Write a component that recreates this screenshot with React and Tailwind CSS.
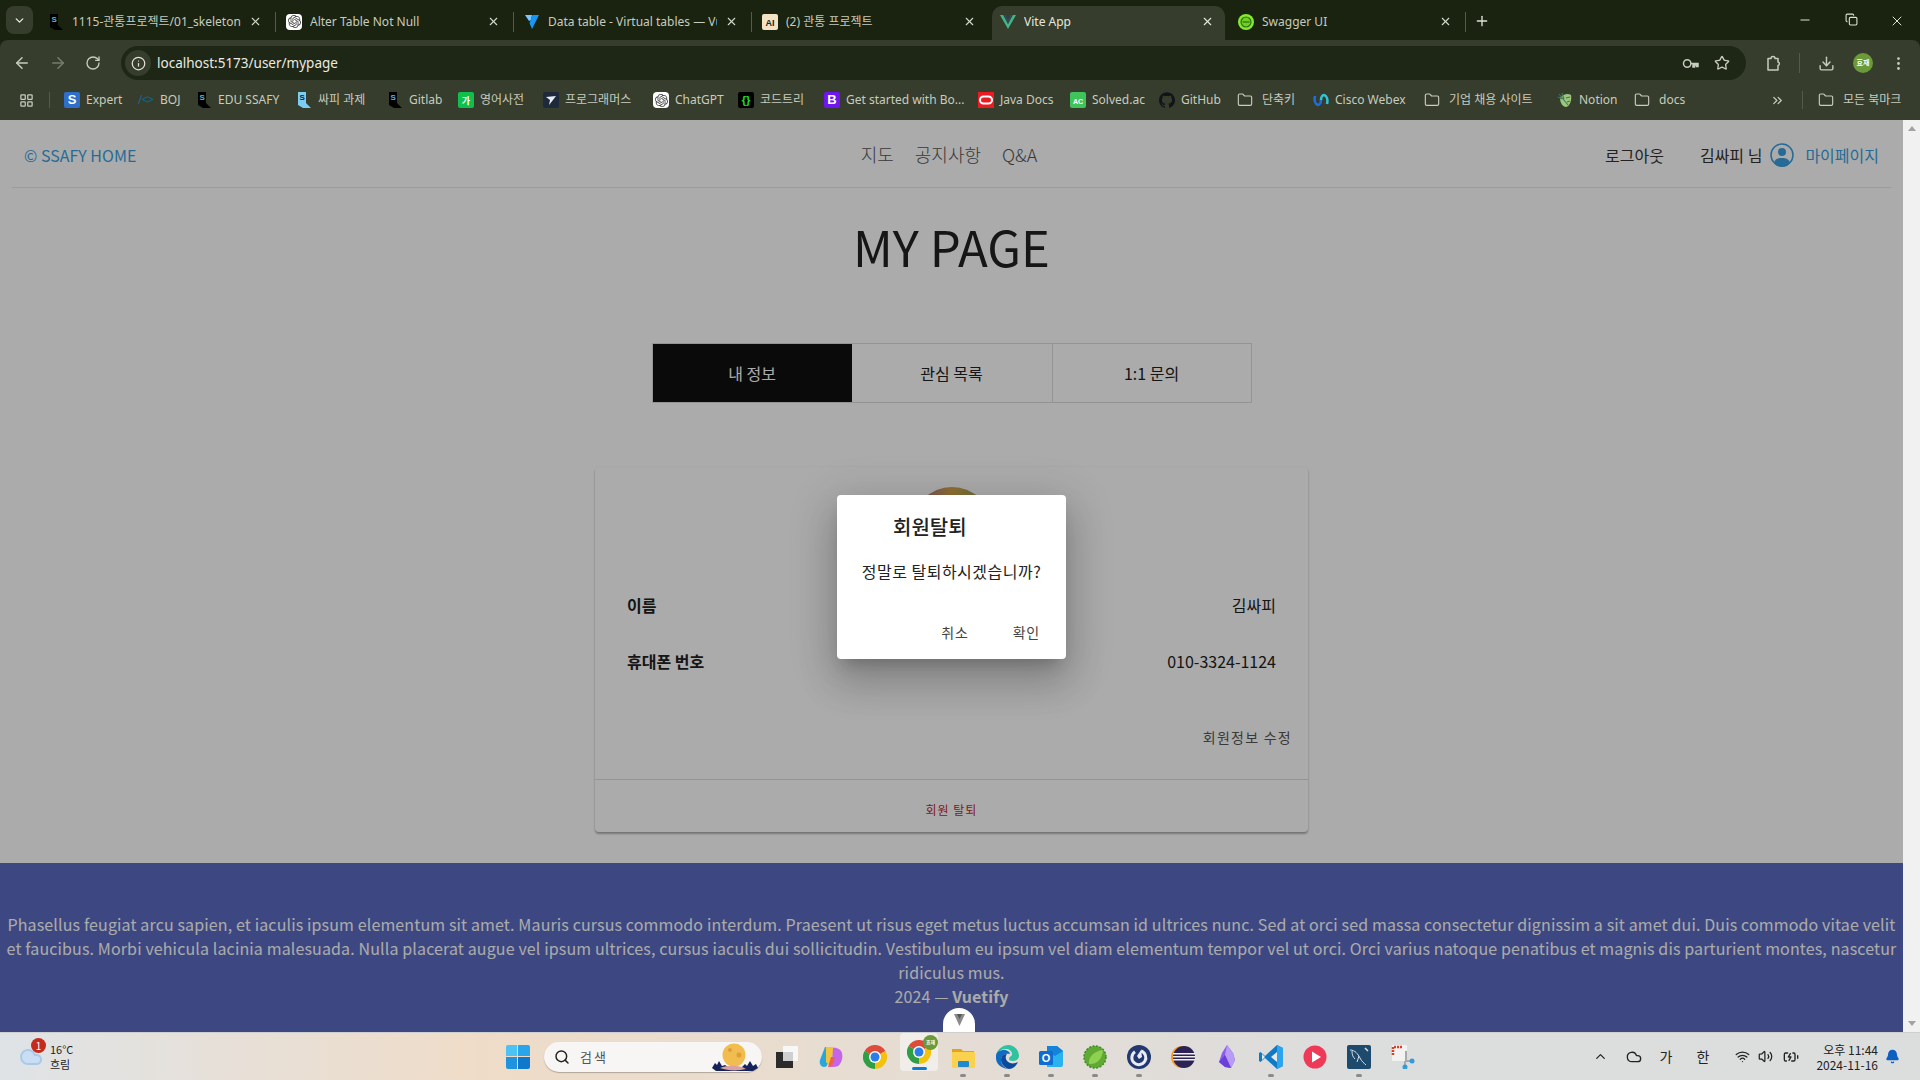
import {
  ArrowLeft,
  ArrowRight,
  BatteryCharging,
  Bell,
  ChevronDown,
  ChevronUp,
  ChevronsRight,
  Cloud,
  Copy,
  Download,
  EllipsisVertical,
  Folder,
  Info,
  LayoutGrid,
  Minus,
  Plus,
  RotateCw,
  Search,
  Star,
  Volume2,
  Wifi,
  X,
} from 'lucide-react'
import { SiGithub, SiOpenai } from 'react-icons/si'

const FOOTER_TEXT =
  'Phasellus feugiat arcu sapien, et iaculis ipsum elementum sit amet. Mauris cursus commodo interdum. Praesent ut risus eget metus luctus accumsan id ultrices nunc. Sed at orci sed massa consectetur dignissim a sit amet dui. Duis commodo vitae velit et faucibus. Morbi vehicula lacinia malesuada. Nulla placerat augue vel ipsum ultrices, cursus iaculis dui sollicitudin. Vestibulum eu ipsum vel diam elementum tempor vel ut orci. Orci varius natoque penatibus et magnis dis parturient montes, nascetur ridiculus mus.'

/* favicons */
function DarkS({ fill = '#000', letter = '#4db6e8' }) {
  return (
    <svg width="16" height="16" viewBox="0 0 16 16">
      <path d="M2 0h8v11l5 5H7l-5-3z" fill={fill} />
      <text x="3.5" y="8" fontSize="8" fontWeight="700" fill={letter} fontFamily="Liberation Sans">S</text>
    </svg>
  )
}

function Badge({ bg, color = '#fff', children, size = 11 }) {
  return (
    <svg width="16" height="16" viewBox="0 0 16 16">
      <rect width="16" height="16" rx="2" fill={bg} />
      <text x="8" y="12.2" textAnchor="middle" fontSize={size} fontWeight="700" fill={color} fontFamily="Liberation Sans, Noto Sans CJK KR">
        {children}
      </text>
    </svg>
  )
}

function GptIcon() {
  return (
    <span className="flex w-4 h-4 items-center justify-center rounded-[4px] bg-white">
      <SiOpenai size={13} color="#444" />
    </span>
  )
}

function VueV() {
  return (
    <svg width="16" height="16" viewBox="0 0 16 16">
      <path d="M0 1h3.2L8 10l4.8-9H16L8 15z" fill="#41b883" />
      <path d="M3.2 1h2.4L8 5.5 10.4 1h2.4L8 10z" fill="#35495e" />
    </svg>
  )
}

function VuetifyV() {
  return (
    <svg width="16" height="16" viewBox="0 0 16 16">
      <path d="M1 1h7l-1 5-2 1z" fill="#7bc6ff" />
      <path d="M15 1H8.500L5.500 9 8 15z" fill="#1697f6" />
    </svg>
  )
}

function SwaggerIcon() {
  return (
    <svg width="16" height="16" viewBox="0 0 16 16">
      <circle cx="8" cy="8" r="8" fill="#85ea2d" />
      <circle cx="8" cy="8" r="5" fill="#6fd01f" stroke="#2f6d1e" strokeWidth="1.200" />
      <rect x="4.500" y="7.400" width="7" height="1.200" fill="#2f6d1e" />
    </svg>
  )
}

function CiscoIcon() {
  return (
    <svg width="16" height="16" viewBox="0 0 16 16" fill="none" strokeWidth="2.600">
      <path d="M2 4c-1 4 0 8 3 9 2 0 3-3 3-5" stroke="#1d6fe0" />
      <path d="M14 12c1-4 0-8-3-9-2 0-3 3-3 5" stroke="#35c2d8" />
    </svg>
  )
}

function NotionLeaf() {
  return (
    <svg width="16" height="16" viewBox="0 0 16 16">
      <path d="M3 6c3-4 8-5 11-3 1 5-1 11-5 12-3 0-6-4-6-9z" fill="#9cc77a" />
      <path d="M2 2l9 11M5 1l2 6M1 5l4 2M9 6l4-1M10 10l3-1" stroke="#3f7a5c" strokeWidth="1.100" />
    </svg>
  )
}

function KeyIcon() {
  return (
    <svg width="17" height="17" viewBox="0 0 17 17" fill="none" stroke="currentColor" strokeWidth="1.500">
      <circle cx="5.200" cy="8.500" r="3.700" />
      <path d="M9 8.500h7v3h-1.500v-1.500h-2v2H11v-3.500" />
    </svg>
  )
}

function ExtensionIcon() {
  return (
    <svg width="18" height="18" viewBox="0 0 18 18" fill="none" stroke="currentColor" strokeWidth="1.500">
      <path d="M4 4.500h3a2 2 0 0 1 4 0h3v3.500a1.800 1.800 0 0 1 0 3.500V16H4z" strokeLinejoin="round" />
    </svg>
  )
}

const BM_FOLDER = <Folder size={16} strokeWidth={1.700} color="#c9ccc0" />

const BOOKMARKS = [
  { w: 'w-[74px]', label: 'Expert', icon: <Badge bg="#2f6fc9" size={13}>S</Badge> },
  {
    w: 'w-[58px]',
    label: 'BOJ',
    icon: <span className="w-4 text-[12px] leading-4 whitespace-nowrap tracking-[-1px] text-[#0b6a9c]">{'/<>'}</span>,
  },
  { w: 'w-[100px]', label: 'EDU SSAFY', icon: <DarkS /> },
  { w: 'w-[91px]', label: '싸피 과제', icon: <DarkS fill="#7ccdf2" letter="#123" /> },
  { w: 'w-[71px]', label: 'Gitlab', icon: <DarkS /> },
  { w: 'w-[85px]', label: '영어사전', icon: <Badge bg="#0fc14c" size={9}>가</Badge> },
  {
    w: 'w-[110px]',
    label: '프로그래머스',
    icon: (
      <svg width="16" height="16" viewBox="0 0 16 16">
        <rect width="16" height="16" rx="2" fill="#1e2a3c" />
        <path d="M3 5l10-1-3 4-4 5 1-5z" fill="#e8edf2" />
      </svg>
    ),
  },
  { w: 'w-[85px]', label: 'ChatGPT', icon: <GptIcon /> },
  { w: 'w-[86px]', label: '코드트리', icon: <Badge bg="#000" color="#1fe01f" size={11}>{'{}'}</Badge> },
  { w: 'w-[154px]', label: 'Get started with Bo...', icon: <Badge bg="#7014f0" size={13}>B</Badge> },
  {
    w: 'w-[92px]',
    label: 'Java Docs',
    icon: (
      <svg width="16" height="16" viewBox="0 0 16 16">
        <rect width="16" height="16" fill="#ea1b22" />
        <rect x="2" y="4.500" width="12" height="7" rx="3.500" fill="none" stroke="#fff" strokeWidth="2" />
      </svg>
    ),
  },
  { w: 'w-[89px]', label: 'Solved.ac', icon: <Badge bg="#3fc45c" size={7}>AC</Badge> },
  { w: 'w-[78px]', label: 'GitHub', icon: <SiGithub size={16} color="#11151a" /> },
  { w: 'w-[76px]', label: '단축키', gap: 'gap-[9px]', icon: BM_FOLDER },
  { w: 'w-[111px]', label: 'Cisco Webex', icon: <CiscoIcon /> },
  { w: 'w-[133px]', label: '기업 채용 사이트', gap: 'gap-[9px]', icon: BM_FOLDER },
  { w: 'w-[77px]', label: 'Notion', icon: <NotionLeaf /> },
  { w: 'w-[60px]', label: 'docs', gap: 'gap-[9px]', icon: BM_FOLDER },
]

const TABS = [
  { title: '1115-관통프로젝트/01_skeleton', icon: <DarkS /> },
  { title: 'Alter Table Not Null', icon: <GptIcon /> },
  { title: 'Data table - Virtual tables — Vuetify', icon: <VuetifyV /> },
  { title: '(2) 관통 프로젝트', icon: <Badge bg="#f4e3c3" color="#222" size={9}>AI</Badge> },
  { title: 'Vite App', icon: <VueV />, active: true },
  { title: 'Swagger UI', icon: <SwaggerIcon /> },
]

function ChromeTab({ title, icon, active }) {
  if (active) {
    return (
      <div className="ml-[2px] mr-[3px] flex h-[34px] w-[233px] items-center gap-2 rounded-t-[10px] bg-[#363d2c] pb-[3px] pl-[8px] pr-[11px]">
        <span className="shrink-0">{icon}</span>
        <span className="flex-1 truncate text-[12px] text-[#e6e8de]">{title}</span>
        <X size={13} color="#e6e8de" />
      </div>
    )
  }
  return (
    <div className="flex h-[34px] w-[238px] items-center gap-2 pb-[3px] pl-[10px] pr-[14px]">
      <span className="shrink-0">{icon}</span>
      <span className="flex-1 overflow-hidden whitespace-nowrap text-[12px] text-[#c8cbbf]">{title}</span>
      <X size={13} color="#d5d8cc" />
    </div>
  )
}

function TabStrip() {
  return (
    <div className="flex h-10 items-end bg-[#1a2310]">
      <div className="mb-[6px] ml-[6px] mr-[5px] flex h-[28px] w-[27px] items-center justify-center self-end rounded-lg bg-[#363d2c]">
        <ChevronDown size={13} color="#e6e8de" strokeWidth={2.500} />
      </div>
      {TABS.map((t, i) => (
        <div key={t.title} className="flex items-center">
          <ChromeTab {...t} />
          {i < 3 || i === 5 ? <span className="ml-[-1px] mb-[3px] h-[20px] w-px bg-[#555b48]" /> : null}
        </div>
      ))}
      <div className="mb-[11px] ml-[8px]">
        <Plus size={16} color="#dfe2d6" />
      </div>
      <div className="ml-auto mb-[11px] flex">
        <span className="flex w-[46px] justify-center"><Minus size={14} color="#dfe2d6" /></span>
        <span className="flex w-[46px] justify-center"><Copy size={13} color="#dfe2d6" /></span>
        <span className="flex w-[46px] justify-center"><X size={16} strokeWidth={1.500} color="#dfe2d6" /></span>
      </div>
    </div>
  )
}

function Toolbar() {
  return (
    <div className="flex h-[43px] items-center rounded-t-lg bg-[#363d2c] pt-[3px] text-[#c8cbbf]">
      <div className="flex w-[121px] gap-[18px] pl-[13px]">
        <ArrowLeft size={18} />
        <ArrowRight size={18} color="#777c6c" />
        <RotateCw size={16} className="mt-px" />
      </div>
      <div className="flex h-[34px] w-[1625px] items-center rounded-full bg-[#1e2616] pl-[4px] pr-[16px]">
        <span className="flex h-[26px] w-[26px] items-center justify-center rounded-full bg-[#363d2c]">
          <Info size={15} color="#e0e3d7" />
        </span>
        <span className="ml-[6px] flex-1 text-[13.500px] text-[#e9ebe2]">localhost:5173/user/mypage</span>
        <span className="mr-[15px]"><KeyIcon /></span>
        <Star size={16} />
      </div>
      <span className="ml-[18px]"><ExtensionIcon /></span>
      <span className="ml-[17px] h-[20px] w-px bg-[#555b48]" />
      <Download size={17} className="ml-[18px]" />
      <span className="ml-[18px] flex h-5 w-5 items-center justify-center rounded-full bg-[#6a9a3a] text-[7px] font-bold text-white">효재</span>
      <EllipsisVertical size={17} className="ml-[17px]" />
    </div>
  )
}

function BookmarksBar() {
  return (
    <div className="flex h-[37px] items-center bg-[#363d2c] pb-[3px] text-[12px] text-[#c8cbbf]">
      <LayoutGrid size={15} className="ml-[19px]" />
      <span className="ml-[15px] mr-[14px] h-[16px] w-px bg-[#555b48]" />
      {BOOKMARKS.map((b) => (
        <div key={b.label} className={`flex shrink-0 items-center whitespace-nowrap ${b.w} ${b.gap || 'gap-[6px]'}`}>
          <span className="flex h-4 w-4 shrink-0">{b.icon}</span>
          <span>{b.label}</span>
        </div>
      ))}
      <ChevronsRight size={15} className="ml-[76px]" />
      <span className="ml-[17px] h-[18px] w-px bg-[#555b48]" />
      <div className="ml-[15px] flex items-center gap-[9px] whitespace-nowrap">
        {BM_FOLDER}
        <span>모든 북마크</span>
      </div>
    </div>
  )
}

function Nav() {
  return (
    <header className="mx-3 grid h-[68px] grid-cols-[1fr_auto_1fr] items-center border-b border-[#e8e8ee] px-3 pt-[2px]">
      <a className="text-[16px] text-[#3b9fdf]">© SSAFY HOME</a>
      <nav className="mr-[5px] flex gap-[21px] text-[18px] font-light text-[#555]">
        <span>지도</span>
        <span>공지사항</span>
        <span>Q&amp;A</span>
      </nav>
      <div className="flex items-center justify-end text-[16px] text-[#333]">
        <span className="mr-[36px]">로그아웃</span>
        <span className="mr-[8px]">김싸피 님</span>
        <svg width="24" height="24" viewBox="0 0 24 24" className="mr-[11px]">
          <circle cx="12" cy="12" r="11" fill="none" stroke="#3b9fdf" strokeWidth="1.500" />
          <circle cx="12" cy="9" r="4" fill="#3b9fdf" />
          <path d="M4 20c1-4 4-5 8-5s7 1 8 5c-2 3-5 4-8 4s-6-1-8-4z" fill="#3b9fdf" />
        </svg>
        <span className="text-[#3b9fdf]">마이페이지</span>
      </div>
    </header>
  )
}

function MyPageTabs() {
  return (
    <div className="mx-auto flex h-[60px] w-[600px] border border-[#ddd] text-[16px] text-[#222]">
      <div className="flex w-[199px] items-center justify-center bg-[#0f0f0f] text-white">내 정보</div>
      <div className="flex w-[201px] items-center justify-center border-r border-[#ddd]">관심 목록</div>
      <div className="flex flex-1 items-center justify-center">1:1 문의</div>
    </div>
  )
}

function ProfileCard() {
  return (
    <section className="mx-auto mt-[64px] h-[365px] w-[713px] rounded-[4px] bg-white shadow-[0_2px_2px_rgba(0,0,0,0.3),0_0_2px_rgba(0,0,0,0.08)]">
      <div className="mx-auto h-20 w-20 translate-y-[20px] rounded-full bg-linear-to-r from-[#9a6a8a] via-[#d9a84a] to-[#7aa060]" />
      <div className="mt-[30px] px-8 text-[16px] text-[#222]">
        <div className="flex h-14 items-center justify-between">
          <span className="font-bold">이름</span>
          <span>김싸피</span>
        </div>
        <div className="flex h-14 items-center justify-between">
          <span className="font-bold">휴대폰 번호</span>
          <span>010-3324-1124</span>
        </div>
      </div>
      <div className="mt-[36px] pr-[16px] text-right text-[14px] leading-6 tracking-[1.25px] text-[#555]">회원정보 수정</div>
      <div className="mt-[30px] h-[53px] border-t border-[#ddd] pt-[18px] text-center text-[12px] leading-6 tracking-[1px] text-[#c62828]">회원 탈퇴</div>
    </section>
  )
}

function Footer() {
  return (
    <footer className="mt-[31px] h-[169px] bg-[#5c6bc0] px-[6px] pt-[49px] text-center text-[16px] font-normal leading-6 tracking-[0.13px] text-white">
      <p>{FOOTER_TEXT}</p>
      <p>
        2024 — <strong>Vuetify</strong>
      </p>
    </footer>
  )
}

function ConfirmDialog() {
  return (
    <div className="absolute inset-0 flex items-center justify-center bg-black/33">
      <div className="mt-[1px] h-[164px] w-[229px] rounded-[4px] bg-white text-[#222] shadow-[0_11px_15px_-7px_rgba(0,0,0,0.2),0_24px_38px_3px_rgba(0,0,0,0.14),0_9px_46px_8px_rgba(0,0,0,0.12)]">
        <h2 className="pl-[56px] pt-[17px] text-[20px] font-medium leading-[30px]">회원탈퇴</h2>
        <p className="mt-[17px] text-center text-[16px] leading-6 tracking-[0.5px]">정말로 탈퇴하시겠습니까?</p>
        <div className="mt-[37px] flex justify-end gap-[44px] pr-[26px] text-[14px] leading-6 tracking-[0.8px] text-[#444]">
          <span>취소</span>
          <span>확인</span>
        </div>
      </div>
    </div>
  )
}

function Scrollbar() {
  return (
    <div className="flex w-[17px] shrink-0 flex-col items-center justify-between bg-[#f1f1f1] py-[6px]">
      <span className="h-0 w-0 border-x-[4px] border-b-[5px] border-x-transparent border-b-[#a3a3a3]" />
      <span className="h-0 w-0 border-x-[4px] border-t-[5px] border-x-transparent border-t-[#a3a3a3]" />
    </div>
  )
}

/* taskbar icons, 24x24 */
const TASK_ICONS = {
  taskview: (
    <svg width="24" height="24" viewBox="0 0 24 24">
      <rect x="8" y="1" width="15" height="15" fill="#f7f7f7" />
      <rect x="1" y="7" width="17" height="16" fill="#2b2b2b" />
      <rect x="8" y="7" width="10" height="9" fill="#cfcfcf" />
    </svg>
  ),
  copilot: (
    <svg width="24" height="24" viewBox="0 0 24 24">
      <path d="M6 2h7l-4 16c-1 3-2 4-4 4-3 0-5-3-4-7z" fill="#2aa6dc" />
      <path d="M7 2h6c2 0 3 1 3 3l-6 15-3-3z" fill="#f2c43c" />
      <path d="M14 3c1-1 8 0 9 5 1 4 0 8-2 11-1 2-3 3-7 3h-6c3 0 4-1 5-4z" fill="#c566e8" />
      <path d="M12 12h4l-2 7c-1 2-3 3-5 3z" fill="#f0604e" />
    </svg>
  ),
  chrome: <ChromeLogo />,
  folder: (
    <svg width="24" height="24" viewBox="0 0 24 24">
      <path d="M1 4h9l2 2h11v4H1z" fill="#e3a41b" />
      <rect x="1" y="7" width="23" height="16" rx="1" fill="#fbd24e" />
      <rect x="7" y="16" width="11" height="6" rx="1" fill="#1f8ad2" />
    </svg>
  ),
  edge: (
    <svg width="24" height="24" viewBox="0 0 24 24">
      <path d="M1 11C2 4 8 0 13 0c6 0 11 5 11 11 0 3-3 5-6 5-3 0-4-1-4-2 0-3 3-2 3-5 0-3-3-5-6-5-5 0-9 3-10 7z" fill="#2fc3a0" />
      <path d="M1 11c0-4 4-6 8-6 3 0 6 2 6 4-5-1-9 2-9 6 0 4 3 8 8 9C7 24 0 19 1 11z" fill="#0f6cc0" />
      <path d="M14 24c-4-1-8-5-8-9 0-4 3-6 6-6-2 2-2 7 3 9 3 1 6 0 8-1-2 4-5 7-9 7z" fill="#0a4a9c" />
    </svg>
  ),
  outlook: (
    <svg width="24" height="24" viewBox="0 0 24 24">
      <path d="M8 1h10l6 5v14a2 2 0 0 1-2 2H8z" fill="#2ab2ee" />
      <path d="M8 1h10l6 5-8 5-8-5z" fill="#1483d8" />
      <rect x="0" y="6" width="14" height="14" rx="1.500" fill="#0f6cd0" />
      <text x="7" y="17" textAnchor="middle" fontSize="11" fontWeight="700" fill="#fff" fontFamily="Liberation Sans">O</text>
    </svg>
  ),
  spring: (
    <svg width="24" height="24" viewBox="0 0 24 24">
      <circle cx="12" cy="12" r="11" fill="#5fa934" strokeDasharray="2 1.500" strokeWidth="1.500" stroke="#3f8a2a" />
      <path d="M6 19c-1-7 5-13 14-14-1 9-6 15-14 14z" fill="#8ed04f" />
    </svg>
  ),
  mattermost: (
    <svg width="24" height="24" viewBox="0 0 24 24" fill="none">
      <circle cx="12" cy="12" r="12" fill="#22386f" />
      <path d="M14 6a7 7 0 1 1-6 .800" stroke="#e8ecf5" strokeWidth="3" />
      <path d="M14 5l1 7-3 2-2-3z" fill="#e8ecf5" />
    </svg>
  ),
  eclipse: (
    <svg width="24" height="24" viewBox="0 0 24 24">
      <circle cx="11" cy="12" r="11" fill="#f59a23" />
      <circle cx="13" cy="12" r="11" fill="#2c2255" />
      <rect x="2" y="8" width="22" height="1.500" fill="#f2f2f2" />
      <rect x="2" y="11" width="22" height="1.500" fill="#f2f2f2" />
      <rect x="2" y="14" width="22" height="1.500" fill="#f2f2f2" />
    </svg>
  ),
  obsidian: (
    <svg width="24" height="24" viewBox="0 0 24 24">
      <path d="M12 0l6 8 2 7-4 8-6-1-6-5 3-9z" fill="#8a5cf0" />
      <path d="M12 0l-2 10 6 13 4-8-2-7z" fill="#b79bf5" />
      <path d="M4 17l6-7 6 13-6-1z" fill="#6c3fd8" />
    </svg>
  ),
  vscode: (
    <svg width="24" height="24" viewBox="0 0 24 24">
      <path d="M18 0l6 3v18l-6 3L6 13 1.500 17 0 16v-8l1.500-1L6 11z" fill="#0f7ac6" />
      <path d="M18 0l6 3v18l-6 3z" fill="#2ba6ee" />
      <path d="M18 7l-6 5 6 5z" fill="#eee8e4" />
      <path d="M3 9l3 3-3 3z" fill="#eee8e4" />
    </svg>
  ),
  play: (
    <svg width="24" height="24" viewBox="0 0 24 24">
      <circle cx="12" cy="12" r="11.500" fill="#ee3a58" />
      <path d="M9 6.500l9 5.500-9 5.500z" fill="#fff" />
    </svg>
  ),
  mysql: (
    <svg width="24" height="24" viewBox="0 0 24 24" fill="none">
      <rect width="24" height="24" rx="2" fill="#1e4a6e" />
      <path d="M3 5c5 0 8 4 10 8s4 5 6 7M5 6c0 4 1 6 3 8M12 11l-2 6" stroke="#d5e0ea" strokeWidth="1" />
      <path d="M18 3l3 3" stroke="#d5e0ea" strokeWidth="1.500" />
    </svg>
  ),
  snip: (
    <svg width="24" height="24" viewBox="0 0 24 24" fill="none">
      <rect x="1" y="0" width="15" height="16" rx="1" fill="#f2f2f2" />
      <path d="M2 10V2h9" stroke="#d8402a" strokeWidth="2.500" strokeDasharray="2 1" />
      <path d="M15 6v10h8M14 16v6" stroke="#a9a9a9" strokeWidth="2" />
      <circle cx="21" cy="16" r="2.500" fill="#2d9ce0" />
      <circle cx="14" cy="22" r="2.500" fill="#2d9ce0" />
    </svg>
  ),
}

function ChromeLogo() {
  return (
    <svg width="24" height="24" viewBox="0 0 24 24">
      <path d="M12 12L1.600 6A12 12 0 0 1 22.400 6Z" fill="#dd4b39" />
      <path d="M12 12L22.400 6A12 12 0 0 1 12 24Z" fill="#f4c20d" />
      <path d="M12 12L12 24A12 12 0 0 1 1.600 6Z" fill="#2f9e44" />
      <circle cx="12" cy="12" r="6" fill="#fff" />
      <circle cx="12" cy="12" r="4.500" fill="#2b7de9" />
    </svg>
  )
}

function StartLogo() {
  return (
    <div className="grid h-[24px] w-[24px] grid-cols-2 gap-[1px]">
      <span className="rounded-tl-[2px] bg-[#4cc2f5]" />
      <span className="rounded-tr-[2px] bg-[#2aa4ea]" />
      <span className="rounded-bl-[2px] bg-[#1f93e0]" />
      <span className="rounded-br-[2px] bg-[#0f78cc]" />
    </div>
  )
}

function MoonScene() {
  return (
    <svg width="46" height="30" viewBox="0 0 46 30" className="absolute right-[4px] top-0">
      <circle cx="22" cy="13" r="11.500" fill="#f2bd4f" />
      <circle cx="18" cy="8" r="2" fill="#dd9f35" />
      <circle cx="27" cy="13" r="2.500" fill="#dd9f35" />
      <path d="M0 26l3-5 2 2 2-4 3 5 3-1 3 2h14l3-3 2 2 3-5 3 5 3-2 2 4-5 3H4z" fill="#16235a" />
      <path d="M8 26c8-3 20-3 26 1-8 2-18 2-26-1z" fill="#d9a2a0" />
    </svg>
  )
}

function TaskItem({ name, dot }) {
  return (
    <div className="relative flex h-12 w-[44px] shrink-0 items-center justify-center">
      {TASK_ICONS[name]}
      {dot ? <span className="absolute bottom-[4px] h-[3px] w-[6px] rounded-full bg-[#8a8a8a]" /> : null}
    </div>
  )
}

function Taskbar() {
  return (
    <div className="flex h-12 items-center border-t border-[#cfcfcf] bg-linear-to-r from-[#dfe3e6] via-[#efdcc8] via-25% to-[#dcdddd] to-70%">
      <div className="relative ml-[19px] flex w-[475px] items-center">
        <Cloud size={24} fill="#c9def3" color="#a9c9ea" />
        <span className="absolute left-[12px] top-[-4px] flex h-[15px] w-[15px] items-center justify-center rounded-full bg-[#c42b1c] text-[10px] text-white">1</span>
        <div className="ml-[7px] text-[11px] leading-[15px] text-[#222]">
          <div>16°C</div>
          <div>흐림</div>
        </div>
      </div>
      <div className="flex w-[47px] shrink-0 justify-center">
        <StartLogo />
      </div>
      <div className="relative ml-[3px] flex h-[30px] w-[218px] shrink-0 items-center rounded-full bg-[#f7f6f5] pl-[10px] text-[13px] text-[#555] shadow-[0_1px_1px_rgba(0,0,0,0.25)]">
        <Search size={16} color="#222" strokeWidth={2.200} />
        <span className="ml-[10px] tracking-[2px]">검색</span>
        <MoonScene />
      </div>
      <div className="ml-[3px] flex">
        <TaskItem name="taskview" />
        <TaskItem name="copilot" />
        <TaskItem name="chrome" />
        <div className="relative flex h-[38px] w-[44px] items-center justify-center">
          <span className="absolute inset-x-[3px] inset-y-0 rounded-[4px] bg-[#f1eeea]" />
          <span className="relative"><ChromeLogo /></span>
          <span className="absolute right-[3px] top-[2px] flex h-[15px] w-[15px] items-center justify-center rounded-full bg-[#6a9a3a] text-[5px] font-bold text-white">효재</span>
          <span className="absolute bottom-[1px] h-[3px] w-[15px] rounded-full bg-[#0f78d4]" />
        </div>
        <TaskItem name="folder" dot />
        <TaskItem name="edge" dot />
        <TaskItem name="outlook" dot />
        <TaskItem name="spring" dot />
        <TaskItem name="mattermost" dot />
        <TaskItem name="eclipse" />
        <TaskItem name="obsidian" />
        <TaskItem name="vscode" dot />
        <TaskItem name="play" />
        <TaskItem name="mysql" dot />
        <TaskItem name="snip" />
      </div>
      <div className="ml-auto flex items-center text-[#222]">
        <ChevronUp size={15} className="mr-[18px]" />
        <Cloud size={16} className="mr-[18px]" />
        <span className="mr-[24px] text-[14px]">가</span>
        <span className="mr-[26px] text-[14px]">한</span>
        <Wifi size={15} className="mr-[8px]" />
        <Volume2 size={15} className="mr-[10px]" />
        <BatteryCharging size={16} className="mr-[17px]" />
        <div className="text-right text-[12px] leading-[15px]">
          <div>오후 11:44</div>
          <div>2024-11-16</div>
        </div>
        <Bell size={15} fill="#0f5fc0" color="#0f5fc0" className="ml-[7px] mr-[20px]" />
      </div>
    </div>
  )
}

export default function App() {
  return (
    <div className="flex h-screen flex-col overflow-hidden bg-white font-['Noto_Sans_CJK_KR','Noto_Sans',sans-serif]">
      <div className="bg-[#1a2310] font-['Noto_Sans','Noto_Sans_CJK_KR',sans-serif]">
        <TabStrip />
        <Toolbar />
        <BookmarksBar />
      </div>
      <div className="flex min-h-0 flex-1">
        <main className="relative flex-1 overflow-hidden">
          <Nav />
          <h1 className="mb-[61px] mt-[22px] text-center text-[49px] font-normal leading-[72px] text-[#222]">MY PAGE</h1>
          <MyPageTabs />
          <ProfileCard />
          <Footer />
          <ConfirmDialog />
          {/* devtools handle sits above the scrim */}
          <div className="absolute bottom-0 left-[943px] flex h-6 w-8 items-center justify-center rounded-t-[16px] bg-white">
            <svg width="11" height="12" viewBox="0 0 11 12">
              <path d="M0 0h11L5.500 12z" fill="#8a8a8a" />
              <path d="M3 0h5L5.500 5z" fill="#555" />
            </svg>
          </div>
        </main>
        <Scrollbar />
      </div>
      <Taskbar />
    </div>
  )
}
